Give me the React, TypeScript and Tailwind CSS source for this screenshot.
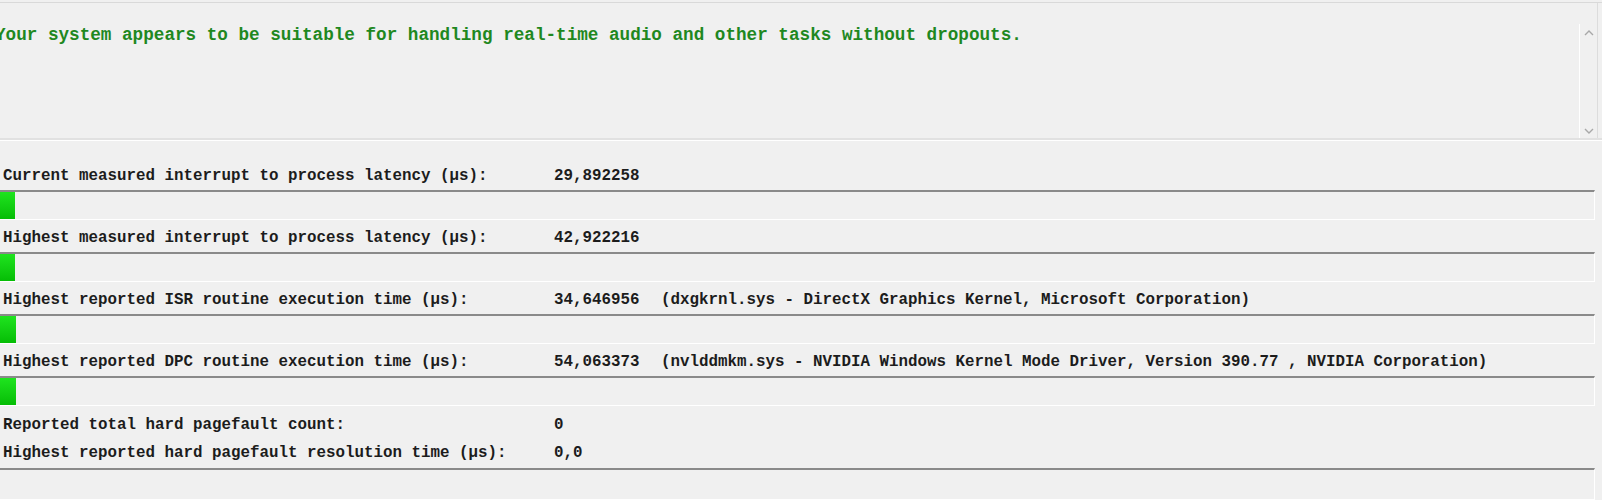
import React from 'react';

type Row = {
  label: string;
  value: string;
  detail?: string;
  fill: number;
};

const rows: Row[] = [
  { label: 'Current measured interrupt to process latency (µs):', value: '29,892258', fill: 15 },
  { label: 'Highest measured interrupt to process latency (µs):', value: '42,922216', fill: 15 },
  {
    label: 'Highest reported ISR routine execution time (µs):',
    value: '34,646956',
    detail: '(dxgkrnl.sys - DirectX Graphics Kernel, Microsoft Corporation)',
    fill: 16,
  },
  {
    label: 'Highest reported DPC routine execution time (µs):',
    value: '54,063373',
    detail: '(nvlddmkm.sys - NVIDIA Windows Kernel Mode Driver, Version 390.77 , NVIDIA Corporation)',
    fill: 16,
  },
];

const Label = ({ label, value, detail }: { label: string; value: string; detail?: string }) => (
  <div className="flex items-center whitespace-pre pl-[3px]">
    <span className="w-[551px] shrink-0">{label}</span>
    <span className="w-[85px] shrink-0">{value}</span>
    {detail && <span className="ml-[22px]">{detail}</span>}
  </div>
);

const Bar = ({ fill, tall }: { fill: number; tall?: boolean }) => (
  <div
    className={`w-[1595px] border-t-2 border-r border-b border-t-[#8a8a8a] border-r-white border-b-white flex ${
      tall ? 'h-[32px]' : 'h-[30px]'
    }`}
  >
    {fill > 0 && <div className="h-full bg-linear-to-b from-[#1ee41e] to-[#05bd05]" style={{ width: fill }} />}
  </div>
);

const Chevron = ({ down }: { down?: boolean }) => (
  <svg width="10" height="6" viewBox="0 0 10 6" className="mx-auto">
    <path
      d={down ? 'M1 1 L5 5 L9 1' : 'M1 5 L5 1 L9 5'}
      fill="none"
      stroke="#a8a8a8"
      strokeWidth="1.4"
    />
  </svg>
);

const App: React.FC = () => {
  return (
    <div className="w-[1602px] h-[500px] overflow-hidden bg-[#f0f0f0] text-[#1c1c1c] font-['Liberation_Mono','Courier_New',monospace]">
      <div className="h-[3px] border-b border-[#d9d9d9]" />

      {/* result text box */}
      <div className="h-[135px] w-[1598px] flex border-r border-[#dcdcdc]">
        <div className="flex-1 overflow-hidden pt-[20px]">
          <div className="-ml-[5px] whitespace-pre text-[17.65px] leading-[24px] font-bold text-[#1f881f]">
            Your system appears to be suitable for handling real-time audio and other tasks without dropouts.
          </div>
        </div>
        <div className="w-[18px] mt-[21px] border-l border-white flex flex-col justify-between pt-[6px] pb-[4px]">
          <Chevron />
          <Chevron down />
        </div>
      </div>
      <div className="h-[2px] bg-[#e1e1e1]" />
      <div className="h-[1px] bg-white" />

      {/* measurements */}
      <div className="h-[17px]" />
      <div className="text-[15.83px] font-bold">
        {rows.map((r) => (
          <div key={r.label}>
            <div className="h-[32px] flex items-center pt-[6px]">
              <Label label={r.label} value={r.value} detail={r.detail} />
            </div>
            <Bar fill={r.fill} />
          </div>
        ))}
        <div className="pt-[6px]">
          <div className="h-[28px] flex items-center">
            <Label label="Reported total hard pagefault count:" value="0" />
          </div>
          <div className="h-[28px] flex items-center">
            <Label label="Highest reported hard pagefault resolution time (µs):" value="0,0" />
          </div>
        </div>
        <div>
          <Bar fill={0} tall />
        </div>
      </div>
    </div>
  );
};

export default App;
